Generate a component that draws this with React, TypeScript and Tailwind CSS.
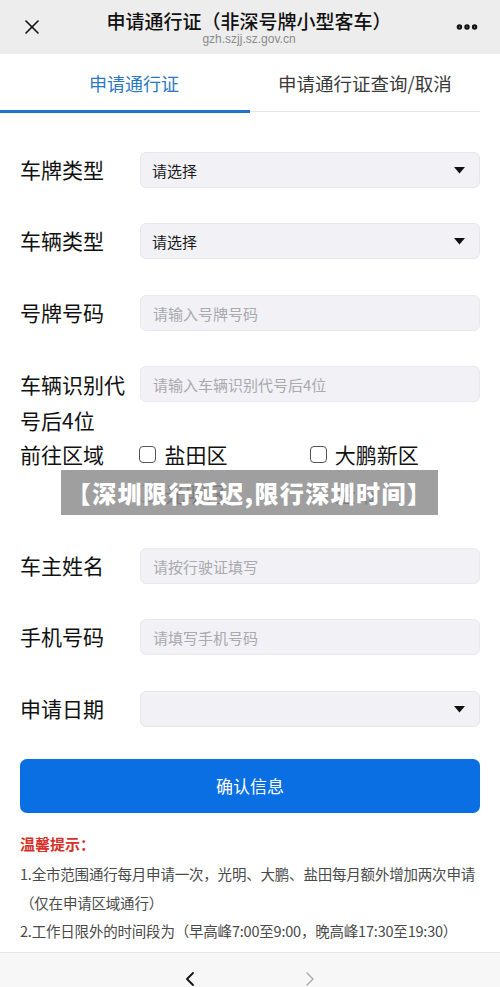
import { X, MoreHorizontal, ChevronLeft, ChevronRight } from "lucide-react";

function SelectBox({ value }: { value?: string }) {
  return (
    <div className="flex-1 h-[36px] rounded-[6px] bg-[#f1f1f6] border border-[#e6e6ec] flex items-center justify-between pl-[11px] pr-[14px]">
      <span className="text-[15px] text-[#1a1a1a] leading-none">{value}</span>
      <svg width="11" height="7" viewBox="0 0 11 7">
        <path d="M0 0 L11 0 L5.5 6.5 Z" fill="#111" />
      </svg>
    </div>
  );
}

function InputBox({ placeholder }: { placeholder: string }) {
  return (
    <div className="flex-1 h-[36px] rounded-[6px] bg-[#f1f1f6] border border-[#e9e9ef] flex items-center pl-[12px]">
      <span className="text-[15px] text-[#a9a9ae] leading-none">{placeholder}</span>
    </div>
  );
}

function Row({ label, children }: { label: string; children: React.ReactNode }) {
  return (
    <div className="flex items-center">
      <div className="w-[120px] text-[21px] leading-[36px] text-[#111] -mt-[3px]">{label}</div>
      {children}
    </div>
  );
}

function Check({ label }: { label: string }) {
  return (
    <div className="flex items-center gap-[8px] w-[171px]">
      <span className="w-[17px] h-[17px] rounded-[4px] border-[1.5px] border-[#555]" />
      <span className="text-[21px] leading-[36px] text-[#111]">{label}</span>
    </div>
  );
}

export default function App() {
  return (
    <div className="w-[500px] h-[987px] bg-white overflow-hidden flex flex-col font-['Noto_Sans_CJK_SC',sans-serif]">
      {/* top bar */}
      <div className="h-[54px] bg-[#ededed] flex items-center px-[20px] shrink-0">
        <X className="w-[24px] h-[24px] text-[#111]" strokeWidth={1.6} />
        <div className="flex-1 flex flex-col items-center pt-[2px]">
          <div className="text-[19px] leading-[21px] text-[#111] font-medium">申请通行证（非深号牌小型客车）</div>
          <div className="mt-[2px] text-[12px] leading-[13px] text-[#8a8a8a] font-['Liberation_Sans',sans-serif]">gzh.szjj.sz.gov.cn</div>
        </div>
        <MoreHorizontal className="w-[26px] h-[26px] text-[#111]" strokeWidth={3} />
      </div>

      {/* tabs */}
      <div className="h-[59px] flex shrink-0">
        <div className="w-1/2 flex flex-col">
          <div className="flex-1 flex items-center pl-[89px] text-[18px] text-[#2a78c4] pt-[2px]">申请通行证</div>
          <div className="h-[3px] bg-[#1f73c9]" />
        </div>
        <div className="w-1/2 flex flex-col">
          <div className="flex-1 flex items-center pl-[28px] text-[18.5px] text-[#3a3a3a] pt-[2px]">申请通行证查询/取消</div>
          <div className="h-[1px] mb-[1px] bg-[#e4e4e4] mr-[20px]" />
        </div>
      </div>

      {/* form */}
      <div className="px-[20px] pt-[39px] flex flex-col">
        <Row label="车牌类型">
          <SelectBox value="请选择" />
        </Row>
        <div className="h-[35px]" />
        <Row label="车辆类型">
          <SelectBox value="请选择" />
        </Row>
        <div className="h-[36px]" />
        <Row label="号牌号码">
          <InputBox placeholder="请输入号牌号码" />
        </Row>
        <div className="h-[35px]" />
        <div className="flex items-start">
          <div className="w-[120px] text-[21px] leading-[36px] text-[#111]">车辆识别代号后4位</div>
          <InputBox placeholder="请输入车辆识别代号后4位" />
        </div>
        <div className="relative flex flex-col -mt-[2px]">
          <div className="flex items-center">
            <div className="w-[120px] text-[21px] leading-[36px] text-[#111]">前往区域</div>
            <Check label="盐田区" />
            <Check label="大鹏新区" />
          </div>
          <div className="flex items-center mt-[3px]">
            <div className="w-[120px]" />
            <Check label="光明区" />
            <Check label="全市" />
          </div>
          <div className="absolute left-[41px] top-[34px] w-[377px] h-[45px] bg-[#8e8e8e]/85 flex items-center justify-center">
            <span className="text-[24px] leading-none font-black text-white tracking-[1.4px]">【深圳限行延迟,限行深圳时间】</span>
          </div>
        </div>
        <div className="h-[37px]" />
        <Row label="车主姓名">
          <InputBox placeholder="请按行驶证填写" />
        </Row>
        <div className="h-[35px]" />
        <Row label="手机号码">
          <InputBox placeholder="请填写手机号码" />
        </Row>
        <div className="h-[36px]" />
        <Row label="申请日期">
          <SelectBox />
        </Row>

        <button className="mt-[32px] h-[54px] rounded-[7px] bg-[#0a6fe3] text-white text-[17px]">确认信息</button>

        <div className="mt-[21px] text-[15px] leading-[20px] font-bold text-[#d6322b]">温馨提示：</div>
        <div className="mt-[6px] text-[14.5px] leading-[28.5px] text-[#4a4a4a] tracking-[-0.2px]">
          <div>1.全市范围通行每月申请一次，光明、大鹏、盐田每月额外增加两次申请</div>
          <div>（仅在申请区域通行）</div>
          <div>2.工作日限外的时间段为（早高峰7:00至9:00，晚高峰17:30至19:30）</div>
        </div>
      </div>

      {/* bottom bar */}
      <div className="mt-auto h-[35px] bg-[#f7f7f7] border-t border-[#e6e6e6] flex items-end justify-center gap-[96px] shrink-0">
        <ChevronLeft className="w-[24px] h-[24px] text-[#111] -mb-[4px]" strokeWidth={1.8} />
        <ChevronRight className="w-[24px] h-[24px] text-[#a8a8a8] -mb-[4px]" strokeWidth={1.4} />
      </div>
    </div>
  );
}
